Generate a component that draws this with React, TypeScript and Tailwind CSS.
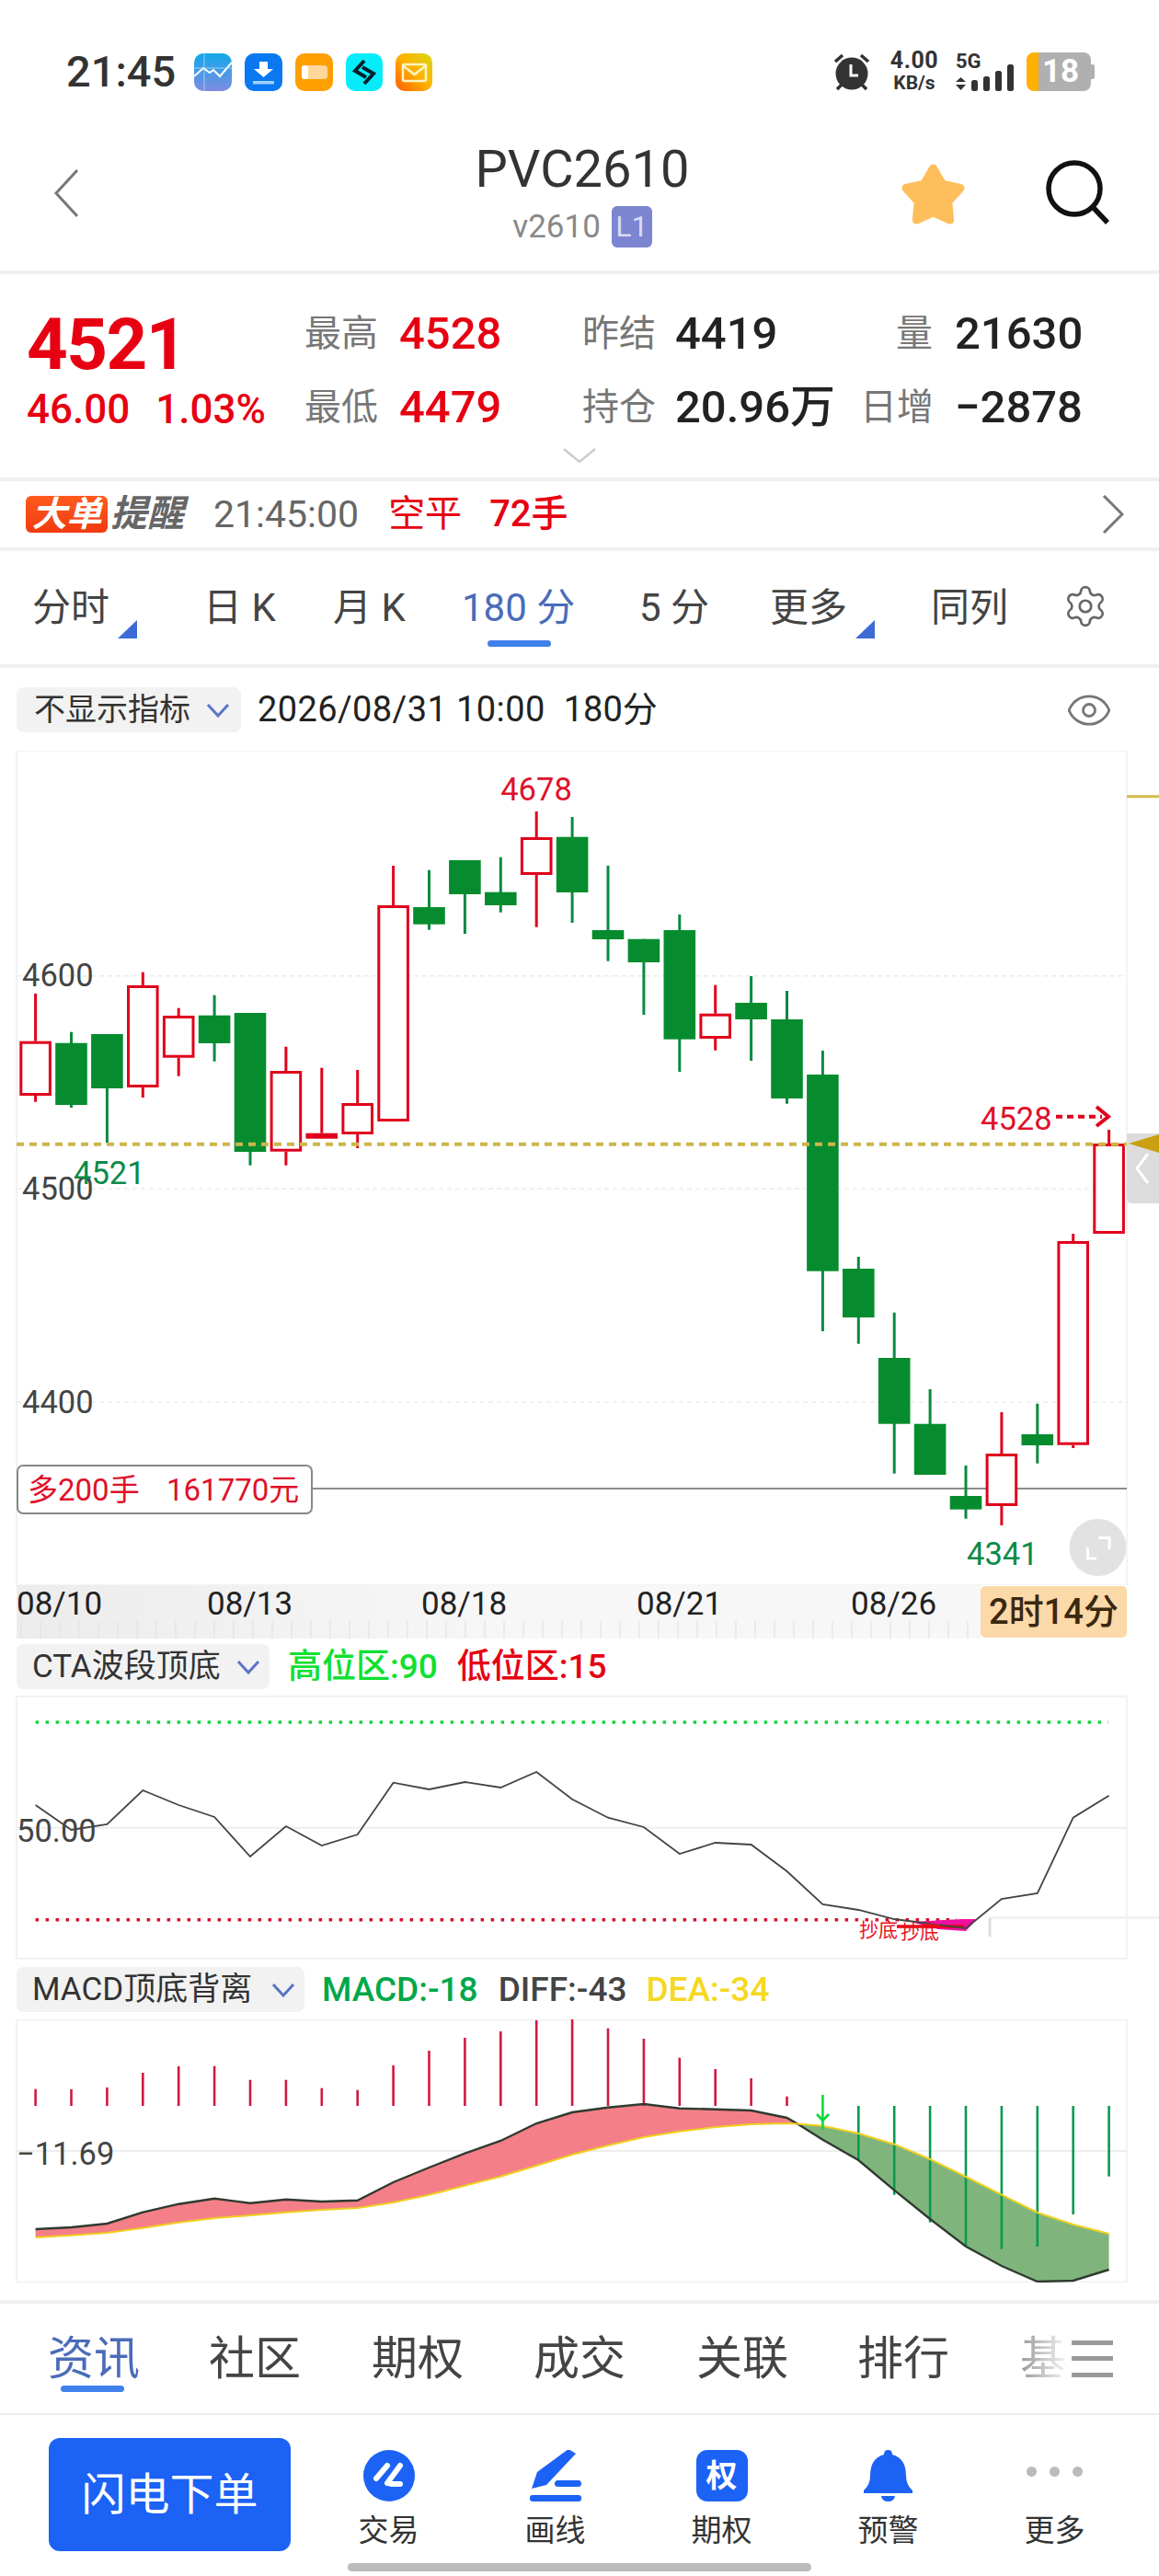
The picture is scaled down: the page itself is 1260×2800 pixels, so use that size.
import React from "react";
import { Eye, Settings } from "lucide-react";

const X = (i: number) => 38.6 + 38.9 * i;
type C = ["r" | "g", number, number, number, number];
const candles: C[] = [
  ["r", 1081, 1132.7, 1192, 1198.7],
  ["g", 1122.7, 1134.7, 1202, 1205],
  ["g", 1125, 1125, 1184, 1243],
  ["r", 1057.7, 1072, 1183, 1194],
  ["r", 1096.7, 1105, 1150.7, 1170.7],
  ["g", 1082.7, 1104.7, 1135, 1154.7],
  ["g", 1102, 1102, 1253, 1267.7],
  ["r", 1138.7, 1165, 1252.7, 1267.7],
  ["r", 1161.7, 1232.7, 1238.7, 1238.7],
  ["r", 1164, 1200, 1234, 1249],
  ["r", 942, 985, 1220, 1220],
  ["g", 946.7, 987, 1005.7, 1011.7],
  ["g", 936, 936, 973, 1016],
  ["g", 932.7, 970.7, 985, 992.7],
  ["r", 883, 911, 952, 1008.7],
  ["g", 889, 910.7, 971, 1004],
  ["g", 942, 1012, 1022, 1045.7],
  ["g", 1021.7, 1021.7, 1047, 1104],
  ["g", 995, 1012, 1130.7, 1166],
  ["r", 1071.7, 1102.7, 1130, 1142.7],
  ["g", 1062, 1091, 1109, 1154],
  ["g", 1078, 1109, 1195, 1200.7],
  ["g", 1143, 1169, 1382.7, 1448],
  ["g", 1367, 1380, 1433, 1461.7],
  ["g", 1427.7, 1477, 1548.7, 1602.7],
  ["g", 1511, 1548.7, 1604, 1604],
  ["g", 1594, 1627, 1641.7, 1651.7],
  ["r", 1536, 1581, 1638, 1659],
  ["g", 1526.7, 1560, 1572, 1591.7],
  ["r", 1342, 1350, 1571.7, 1575],
  ["r", 1229, 1244, 1342, 1342],
];
const cta = [1963, 1990, 1984, 1947, 1963, 1976, 2019, 1986, 2007, 1995, 1938.7, 1946, 1938, 1944, 1927, 1956.7, 1976.7, 1987, 2016, 2004, 2006, 2035, 2071, 2077, 2087, 2092, 2097, 2065, 2059, 1976.7, 1952.7];
const macdTop = [2271.7, 2272, 2270, 2254, 2247, 2246.7, 2261.7, 2261.7, 2270.7, 2272.7, 2246, 2230, 2216, 2209, 2197, 2196, 2205.7, 2217, 2237.7, 2250, 2260, 2279.7];
const macdBot = [2348, 2386.7, 2416.7, 2441.7, 2445.7, 2443, 2408, 2366.7];
const diff = [2424, 2422, 2418, 2405.7, 2396.7, 2390.7, 2395.7, 2391.7, 2394, 2392.7, 2373, 2357, 2341.7, 2328, 2309, 2297, 2291.7, 2288, 2292.7, 2293.7, 2295, 2303];
const diff2 = [2326.7, 2349, 2381.7, 2413, 2442.7, 2464, 2481, 2480, 2468];
const dea = [2433, 2430.7, 2428, 2422.7, 2416.7, 2412, 2409, 2405.7, 2403, 2401, 2395, 2386.7, 2376.7, 2366.7, 2355, 2343, 2333, 2324, 2317.7, 2313, 2310, 2309];
const dea2 = [2311.7, 2320, 2331.7, 2348, 2367, 2386.7, 2406, 2419, 2429];
const cross = "867,2309.5";
const pts = (a: number[], from = 0) => a.map((y, i) => `${X(i + from).toFixed(1)},${y}`).join(" ");
const RED = "#e0001b";
const GREEN = "#068c2e";

function MainChart() {
  return (
    <svg viewBox="0 817 1260 907" className="block w-[1260px] h-[907px]">
      <rect x="18" y="817" width="1207" height="907" fill="none" stroke="#f0f0f0" strokeWidth="1.5" />
      {[1061.7, 1293, 1525].map((y) => (
        <line key={y} x1="18" x2="1225" y1={y} y2={y} stroke="#ececec" strokeWidth="1.5" strokeDasharray="5 4" />
      ))}
      <line x1="339" x2="1225" y1="1619" y2="1619" stroke="#666" strokeWidth="1.6" />
      {candles.map(([c, wt, bt, bb, wb], i) => {
        const x = X(i);
        if (c === "g")
          return (
            <g key={i}>
              <line x1={x} x2={x} y1={wt} y2={wb} stroke="#0a8a40" strokeWidth="3" />
              <rect x={x - 17.3} y={bt} width="34.6" height={bb - bt} fill={GREEN} />
            </g>
          );
        return (
          <g key={i}>
            <line x1={x} x2={x} y1={wt} y2={bt} stroke={RED} strokeWidth="3" />
            <line x1={x} x2={x} y1={bb} y2={wb} stroke={RED} strokeWidth="3" />
            <rect x={x - 15.8} y={bt + 1.5} width="31.6" height={bb - bt - 3} fill="#fff" stroke={RED} strokeWidth="3" />
          </g>
        );
      })}
      <line x1="18" x2="1225" y1="1244.7" y2="1244.7" stroke="#cdb64a" strokeWidth="4" strokeDasharray="8 6" />
      <g fontSize="34.5" fill="#444">
        <text x="24" y="1073">4600</text>
        <text x="24" y="1305">4500</text>
        <text x="24" y="1537">4400</text>
      </g>
      <text x="583" y="871" fontSize="34.5" fill="#e0102a" textAnchor="middle">4678</text>
      <text x="80" y="1288" fontSize="34.5" fill="#0a8a48">4521</text>
      <text x="1066" y="1229" fontSize="34.5" fill="#e0102a">4528</text>
      <text x="1051" y="1702" fontSize="34.5" fill="#0a8a48">4341</text>
      <line x1="1148" x2="1198" y1="1214.7" y2="1214.7" stroke={RED} strokeWidth="4" strokeDasharray="7 5" />
      <path d="M1192 1204 L1205 1214.7 L1192 1225" fill="none" stroke={RED} strokeWidth="4" />
      <path d="M1225 1233 H1260 V1309 H1231 Q1225 1309 1225 1303 Z" fill="#dcdcdc" />
      <path d="M1227 1244 L1260 1234 V1254 Z" fill="#c9a010" />
      <path d="M1248 1255 L1236 1271 L1248 1287" fill="none" stroke="#fff" strokeWidth="3" />
      <line x1="1225" x2="1260" y1="866.7" y2="866.7" stroke="#d4b94a" strokeWidth="3" />
      <circle cx="1193.5" cy="1683" r="31" fill="#e2e2e2" />
      <path d="M1194 1672.5 H1206 V1685 M1182.5 1683 V1695 H1192" fill="none" stroke="#fff" strokeWidth="3" />
      <rect x="19" y="1594" width="320" height="52" rx="6" fill="#fff" stroke="#888" strokeWidth="2" />
      <text x="30" y="1632" fontSize="33" fill="#e0102a">多200手</text>
      <text x="181" y="1632" fontSize="33" fill="#e0102a">161770元</text>
    </svg>
  );
}

function CtaChart() {
  return (
    <svg viewBox="0 1844 1260 287" className="block w-[1260px] h-[287px]">
      <rect x="18" y="1845" width="1207" height="285" fill="none" stroke="#eee" strokeWidth="1.5" />
      <line x1="18" x2="1225" y1="1987.7" y2="1987.7" stroke="#eee" strokeWidth="2" />
      <line x1="38.6" x2="1205" y1="1873" y2="1873" stroke="#16d43c" strokeWidth="3.5" strokeDasharray="3.5 7.5" />
      <line x1="38.6" x2="1040" y1="2087.7" y2="2087.7" stroke="#d8102c" strokeWidth="3.5" strokeDasharray="3.5 7.5" />
      <polygon points="990,2090 1046,2087 1062,2087 1050,2100 1020,2098" fill="#f010a0" />
      <line x1="975" x2="1048" y1="2095" y2="2095" stroke="#f00018" strokeWidth="3.5" />
      <rect x="1075" y="2084" width="350" height="3" fill="#f2f2f2" />
      <line x1="1076" x2="1076" y1="2086" y2="2106" stroke="#ddd" strokeWidth="3" />
      <polyline points={pts(cta)} fill="none" stroke="#444" strokeWidth="1.8" />
      <text x="18" y="2003" fontSize="34.5" fill="#444">50.00</text>
      <g fontSize="21" fill="#e8101c">
        <text x="934" y="2106">抄底</text>
        <text x="979" y="2108">抄底</text>
      </g>
    </svg>
  );
}

function MacdChart() {
  const up = `${pts(diff)} ${cross} ${[...dea].reverse().map((y, i) => `${X(21 - i).toFixed(1)},${y}`).join(" ")}`;
  const down = `${cross} ${pts(diff2, 22)} ${[...dea2].reverse().map((y, i) => `${X(30 - i).toFixed(1)},${y}`).join(" ")}`;
  return (
    <svg viewBox="0 2196 1260 286" className="block w-[1260px] h-[286px]">
      <rect x="18" y="2196.5" width="1207" height="285" fill="none" stroke="#eee" strokeWidth="1.5" />
      <line x1="18" x2="1225" y1="2339" y2="2339" stroke="#eee" strokeWidth="2" />
      <polygon points={up} fill="#f47f88" />
      <polygon points={down} fill="#7fb57d" />
      {macdTop.map((y, i) => (
        <line key={i} x1={X(i)} x2={X(i)} y1={y} y2="2290" stroke="#d0193f" strokeWidth="2.6" />
      ))}
      {macdBot.map((y, i) => (
        <line key={i} x1={X(i + 23)} x2={X(i + 23)} y1="2290" y2={y} stroke="#079a50" strokeWidth="2.6" />
      ))}
      <polyline points={`${pts(diff)} ${cross} ${pts(diff2, 22)}`} fill="none" stroke="#2f3a2f" strokeWidth="2.4" />
      <polyline points={`${pts(dea)} ${cross} ${pts(dea2, 22)}`} fill="none" stroke="#f0cf20" strokeWidth="2" />
      <line x1={X(22)} x2={X(22)} y1="2278" y2="2316" stroke="#10d838" strokeWidth="2.6" />
      <path d="M888 2299 L894.4 2306 L901 2299" fill="none" stroke="#10d838" strokeWidth="2.6" />
      <text x="18" y="2354" fontSize="34.5" fill="#444">−11.69</text>
    </svg>
  );
}

function Chevron() {
  return (
    <svg viewBox="0 0 26 16" className="w-[26px] h-[16px] ml-auto">
      <path d="M2 2 L13 14 L24 2" fill="none" stroke="#5a74c8" strokeWidth="3" />
    </svg>
  );
}

function Triangle() {
  return (
    <svg viewBox="0 0 21 20" className="absolute w-[21px] h-[20px] right-[-30px] bottom-[-8px]">
      <path d="M21 0 V20 H0 Z" fill="#3c6bd6" />
    </svg>
  );
}

function StatusIcons() {
  return (
    <div className="flex items-center gap-[14px] ml-[20px]">
      <svg viewBox="0 0 41 41" className="w-[41px] h-[41px]">
        <defs>
          <linearGradient id="st" x1="0" y1="0" x2="0" y2="1">
            <stop offset="0" stopColor="#12a8ea" />
            <stop offset="1" stopColor="#7f8be0" />
          </linearGradient>
        </defs>
        <rect width="41" height="41" rx="10" fill="url(#st)" />
        <path d="M0 25 L10 16 L17 21 L21 18 L28 25 L41 10" fill="none" stroke="#fff" strokeWidth="2" />
        <path d="M11 0 V41 M0 16 H41" stroke="#bfe8ff" strokeWidth="0.7" />
      </svg>
      <svg viewBox="0 0 41 41" className="w-[41px] h-[41px]">
        <rect width="41" height="41" rx="10" fill="#0a78f0" />
        <path d="M16 9 H25 V17 H31 L20.5 26 L10 17 H16 Z" fill="#fff" />
        <rect x="9" y="30" width="23" height="3.5" fill="#9fd0ff" />
      </svg>
      <svg viewBox="0 0 41 41" className="w-[41px] h-[41px]">
        <rect width="41" height="41" rx="10" fill="#ff9f00" />
        <rect x="7" y="13" width="28" height="15" rx="4" fill="#ffd79a" />
        <rect x="7" y="13" width="7" height="15" rx="3" fill="#fff" />
      </svg>
      <svg viewBox="0 0 40 41" className="w-[40px] h-[41px]">
        <rect width="40" height="41" rx="10" fill="#05ecfb" />
        <path d="M20 8 L10 19 L22 26 M20 33 L30 22 L18 15" fill="none" stroke="#04202a" strokeWidth="4" />
      </svg>
      <svg viewBox="0 0 40 41" className="w-[40px] h-[41px]">
        <defs>
          <linearGradient id="ml" x1="1" y1="0" x2="0" y2="1">
            <stop offset="0" stopColor="#d8d810" />
            <stop offset="0.5" stopColor="#ffb000" />
            <stop offset="1" stopColor="#ff5a00" />
          </linearGradient>
        </defs>
        <rect width="40" height="41" rx="10" fill="url(#ml)" />
        <rect x="8" y="12" width="25" height="18" rx="1.5" fill="none" stroke="#fff3c4" strokeWidth="2.6" />
        <path d="M9 14 L20.5 23 L32 14" fill="none" stroke="#fff3c4" strokeWidth="2.6" />
      </svg>
    </div>
  );
}

function StatusRight() {
  return (
    <div className="flex items-center ml-auto mr-[70px] text-[#333]">
      <svg viewBox="0 0 40 42" className="w-[40px] h-[42px]">
        <circle cx="20" cy="23" r="17.5" fill="#333" />
        <path d="M19 13 V25 H27" fill="none" stroke="#fff" strokeWidth="3" />
        <path d="M2 10 L10 3 M30 3 L38 10 M4 40 L9 35 M36 40 L31 35" stroke="#333" strokeWidth="3.6" />
      </svg>
      <div className="flex flex-col items-center w-[54px] ml-[21px] font-bold">
        <span className="text-[25px] leading-[24px] tracking-[0.5px]">4.00</span>
        <span className="text-[21px] leading-[24px]">KB/s</span>
      </div>
      <div className="flex flex-col ml-[18px] w-[64px]">
        <span className="text-[22px] leading-[19px] font-bold h-[15px]">5G</span>
        <svg viewBox="0 0 64 29" className="w-[64px] h-[29px] -mt-[2px]">
          <path d="M0 19 L5.5 14 L11 19 Z M0 22 L5.5 28 L11 22 Z" fill="#333" />
          <rect x="17" y="17" width="7" height="12" rx="2.5" fill="#333" />
          <rect x="30" y="13" width="7" height="16" rx="2.5" fill="#333" />
          <rect x="43" y="7" width="7" height="22" rx="2.5" fill="#333" />
          <rect x="56" y="0" width="7" height="29" rx="2.5" fill="#333" />
        </svg>
      </div>
      <div className="flex items-center ml-[13px]">
        <div className="flex w-[70px] h-[42px] rounded-[8px] overflow-hidden">
          <div className="w-[13px] bg-[#ffb000]"></div>
          <div className="flex-1 bg-[#b0b0b0] text-white text-[35px] leading-[42px] font-bold pl-[4px]">18</div>
        </div>
        <div className="w-[4px] h-[16px] bg-[#b0b0b0] rounded-r-[2px]"></div>
      </div>
    </div>
  );
}

function Star() {
  const p: string[] = [];
  for (let k = 0; k < 10; k++) {
    const r = k % 2 === 0 ? 31 : 17;
    const a = (Math.PI / 5) * k - Math.PI / 2;
    p.push(`${(35.5 + r * Math.cos(a)).toFixed(1)},${(40 + r * Math.sin(a)).toFixed(1)}`);
  }
  return (
    <svg viewBox="0 0 71 71" className="w-[71px] h-[71px]">
      <polygon points={p.join(" ")} fill="#ffbe5c" stroke="#ffbe5c" strokeWidth="9" strokeLinejoin="round" />
    </svg>
  );
}

function Stat({ label, value, red, labelW = 79, gap = 24 }: { label: string; value: string; red?: boolean; labelW?: number; gap?: number }) {
  return (
    <div className="flex items-center h-[50px]">
      <span className="text-[40px] leading-[50px] text-[#777] text-right whitespace-nowrap" style={{ width: labelW }}>{label}</span>
      <span className={`text-[49px] leading-[50px] font-medium whitespace-nowrap ${red ? "text-[#e60012]" : "text-[#222]"}`} style={{ marginLeft: gap }}>{value}</span>
    </div>
  );
}

function Tab({ w, active, tri, children }: { w: string; active?: boolean; tri?: boolean; children: React.ReactNode }) {
  return (
    <div className={`${w} h-full flex items-center`}>
      <span className={`relative text-[42px] leading-[50px] whitespace-nowrap ${active ? "text-[#4a6cb8]" : "text-[#444]"}`}>
        {children}
        {tri && <Triangle />}
        {active && <span className="absolute left-[28px] top-[60px] w-[69px] h-[7px] rounded-[4px] bg-[#3f80ea]"></span>}
      </span>
    </div>
  );
}

function BottomItem({ icon, label }: { icon: React.ReactNode; label: string }) {
  return (
    <div className="w-[181px] flex flex-col items-center mt-[13px]">
      <div className="h-[56px] flex items-center justify-center">{icon}</div>
      <span className="mt-[12px] text-[33px] leading-[40px] text-[#333]">{label}</span>
    </div>
  );
}

export default function App() {
  return (
    <div className="w-[1260px] h-[2800px] bg-white flex flex-col overflow-hidden font-['Roboto','Noto_Sans_CJK_SC',sans-serif]">
      {/* status bar */}
      <div className="h-[130px] pt-[57px] shrink-0">
        <div className="flex items-center h-[42px] pl-[72px]">
          <span className="text-[47px] leading-[42px] font-medium text-[#333]">21:45</span>
          <StatusIcons />
          <StatusRight />
        </div>
      </div>

      {/* nav */}
      <div className="h-[164px] shrink-0 flex">
        <div className="w-[390px] pl-[58px] pt-[53px]">
          <svg viewBox="0 0 28 54" className="w-[28px] h-[54px]">
            <path d="M26 2 L3 27 L26 52" fill="none" stroke="#777" strokeWidth="3" />
          </svg>
        </div>
        <div className="w-[486px] flex flex-col items-center pt-[26px]">
          <span className="text-[56px] leading-[56px] text-[#333]">PVC2610</span>
          <div className="flex items-center gap-[12px] mt-[12px]">
            <span className="text-[35px] leading-[45px] text-[#888]">v2610</span>
            <span className="w-[44px] h-[45px] rounded-[6px] bg-[#7c85d0] text-[#d8dcf5] text-[32px] leading-[45px] text-center">L1</span>
          </div>
        </div>
        <div className="flex-1 flex items-start pt-[44px]">
          <div className="ml-[103px]"><Star /></div>
          <svg viewBox="0 0 70 70" className="w-[70px] h-[70px] ml-[87px]">
            <circle cx="31" cy="31" r="28" fill="none" stroke="#111" strokeWidth="5.5" />
            <path d="M51 51 L67 68" stroke="#111" strokeWidth="5.5" />
          </svg>
        </div>
      </div>
      <div className="h-[4px] shrink-0 bg-[#f0f0f0]"></div>

      {/* quote */}
      <div className="h-[221px] shrink-0 flex flex-col">
        <div className="h-[180px] flex">
          <div className="w-[331px] pl-[29px] pt-[38px]">
            <div className="text-[78px] leading-[78px] font-bold tracking-[-1.5px] text-[#e60012]">4521</div>
            <div className="flex gap-[28px] mt-[8px] text-[44px] leading-[46px] font-medium text-[#e60012] whitespace-nowrap">
              <span>46.00</span>
              <span>1.03%</span>
            </div>
          </div>
          <div className="w-[302px] pt-[40px] flex flex-col gap-[30px]">
            <Stat label="最高" value="4528" red />
            <Stat label="最低" value="4479" red />
          </div>
          <div className="w-[302px] pt-[40px] flex flex-col gap-[30px]">
            <Stat label="昨结" value="4419" gap={22} />
            <Stat label="持仓" value="20.96万" gap={22} />
          </div>
          <div className="pt-[40px] flex flex-col gap-[30px]">
            <Stat label="量" value="21630" />
            <Stat label="日增" value="−2878" />
          </div>
        </div>
        <div className="flex justify-center pt-[9px]">
          <svg viewBox="0 0 36 16" className="w-[36px] h-[16px]">
            <path d="M1 1 L18 15 L35 1" fill="none" stroke="#ccc" strokeWidth="2.5" />
          </svg>
        </div>
      </div>
      <div className="h-[4px] shrink-0 bg-[#f0f0f0]"></div>

      {/* big-order alert */}
      <div className="h-[72px] shrink-0 flex items-center pl-[28px]">
        <span className="w-[89px] h-[40px] rounded-[6px] bg-gradient-to-b from-[#ff5a1e] to-[#f03a10] text-white text-[38px] leading-[40px] font-bold italic text-center whitespace-nowrap">大单</span>
        <span className="ml-[3px] text-[40px] leading-[40px] font-bold italic text-[#666]">提醒</span>
        <span className="ml-[32px] text-[41px] leading-[50px] text-[#666]">21:45:00</span>
        <span className="ml-[32px] text-[40px] leading-[50px] text-[#e60012]">空平</span>
        <span className="ml-[30px] text-[40px] leading-[50px] font-medium text-[#e60012]">72手</span>
        <svg viewBox="0 0 24 42" className="w-[24px] h-[42px] ml-auto mr-[38px]">
          <path d="M2 1 L22 21 L2 41" fill="none" stroke="#777" strokeWidth="3" />
        </svg>
      </div>
      <div className="h-[4px] shrink-0 bg-[#f0f0f0]"></div>

      {/* period tabs */}
      <div className="h-[123px] shrink-0 flex pl-[35px]">
        <Tab w="w-[186px]" tri>分时</Tab>
        <Tab w="w-[141px]">日 K</Tab>
        <Tab w="w-[140px]">月 K</Tab>
        <Tab w="w-[193px]" active>180 分</Tab>
        <Tab w="w-[142px]">5 分</Tab>
        <Tab w="w-[175px]" tri>更多</Tab>
        <Tab w="w-[143px]">同列</Tab>
        <div className="h-full flex items-center -mt-[2px]">
          <Settings size={50} strokeWidth={1.3} color="#666" />
        </div>
      </div>
      <div className="h-[4px] shrink-0 bg-[#f0f0f0]"></div>

      {/* main chart header */}
      <div className="h-[90px] shrink-0 pt-[21px] pl-[18px] flex items-start">
        <div className="w-[244px] h-[49px] rounded-[8px] bg-[#f2f2f2] flex items-center pl-[19px] pr-[12px]">
          <span className="text-[34px] leading-[49px] text-[#333] whitespace-nowrap">不显示指标</span>
          <Chevron />
        </div>
        <span className="ml-[18px] text-[38px] leading-[49px] text-[#222] tracking-[0.4px] whitespace-nowrap">2026/08/31 10:00</span>
        <span className="ml-[20px] text-[38px] leading-[49px] text-[#222] whitespace-nowrap">180分</span>
        <div className="ml-auto mr-[50px] h-[49px] flex items-center">
          <Eye size={52} strokeWidth={1.3} color="#777" />
        </div>
      </div>

      <div className="h-[907px] shrink-0"><MainChart /></div>

      {/* date axis */}
      <div className="h-[58px] shrink-0 flex pl-[18px]">
        <div className="w-[1048px] h-full bg-gradient-to-r from-[#ececec] via-[#f7f7f7] to-[#f7f7f7]">
          <svg viewBox="18 1724 1048 58" className="block w-[1048px] h-[58px]">
            {Array.from({ length: 50 }).map((_, i) => (
              <line key={i} x1={23 + 21 * i} x2={23 + 21 * i} y1="1763" y2="1782" stroke="#e2e2e2" strokeWidth="1.2" />
            ))}
            <g fontSize="35" fill="#222">
              <text x="18" y="1756">08/10</text>
              <text x="225" y="1756">08/13</text>
              <text x="458" y="1756">08/18</text>
              <text x="692" y="1756">08/21</text>
              <text x="925" y="1756">08/26</text>
            </g>
          </svg>
        </div>
        <div className="w-[159px] h-[56px] mt-[1px] rounded-[5px] bg-[#fcd9a8] flex items-center justify-center text-[38px] leading-[56px] font-medium text-[#3a2810] whitespace-nowrap">2时14分</div>
      </div>

      {/* CTA */}
      <div className="h-[62px] shrink-0 pt-[6px] pl-[18px] flex items-start">
        <div className="w-[275px] h-[49px] rounded-[8px] bg-[#f2f2f2] flex items-center pl-[17px] pr-[10px]">
          <span className="text-[35px] leading-[49px] text-[#333] whitespace-nowrap">CTA波段顶底</span>
          <Chevron />
        </div>
        <span className="ml-[20px] text-[37px] leading-[49px] font-medium text-[#10e030] whitespace-nowrap">高位区:90</span>
        <span className="ml-[21px] text-[37px] leading-[49px] font-medium text-[#e60012] whitespace-nowrap">低位区:15</span>
      </div>
      <div className="h-[287px] shrink-0"><CtaChart /></div>

      {/* MACD */}
      <div className="h-[65px] shrink-0 pt-[8px] pl-[18px] flex items-start">
        <div className="w-[313px] h-[49px] rounded-[8px] bg-[#f2f2f2] flex items-center pl-[17px] pr-[10px]">
          <span className="text-[35px] leading-[49px] text-[#333] whitespace-nowrap">MACD顶底背离</span>
          <Chevron />
        </div>
        <span className="ml-[19px] text-[37px] leading-[49px] font-medium text-[#00a84a] whitespace-nowrap">MACD:-18</span>
        <span className="ml-[22px] text-[37px] leading-[49px] font-medium text-[#444] whitespace-nowrap">DIFF:-43</span>
        <span className="ml-[21px] text-[37px] leading-[49px] font-medium text-[#f5d820] whitespace-nowrap">DEA:-34</span>
      </div>
      <div className="h-[286px] shrink-0"><MacdChart /></div>

      <div className="h-[19px] shrink-0"></div>
      <div className="h-[4px] shrink-0 bg-[#f0f0f0]"></div>

      {/* info tabs */}
      <div className="h-[119px] shrink-0 flex items-center pl-[52px] text-[50px] leading-[60px] text-[#444]">
        <div className="w-[175px]">
          <span className="relative text-[#4a6cb8]">资讯
            <span className="absolute left-[14px] top-[58px] w-[69px] h-[7px] rounded-[4px] bg-[#3f80ea]"></span>
          </span>
        </div>
        <span className="w-[177px]">社区</span>
        <span className="w-[176px]">期权</span>
        <span className="w-[177px]">成交</span>
        <span className="w-[175px]">关联</span>
        <span className="w-[177px]">排行</span>
        <span className="bg-gradient-to-r from-[#999] to-[#f4f4f4] bg-clip-text text-transparent">基</span>
        <div className="ml-[6px] w-[45px] h-[40px] flex flex-col justify-between">
          <div className="h-[5px] bg-[#999]"></div>
          <div className="h-[5px] bg-[#999]"></div>
          <div className="h-[5px] bg-[#999]"></div>
        </div>
      </div>
      <div className="h-[2px] shrink-0 bg-[#eee]"></div>

      {/* bottom bar */}
      <div className="flex-1 flex flex-col">
        <div className="flex items-start pt-[25px] pl-[53px]">
          <div className="w-[263px] h-[123px] rounded-[12px] bg-[#1c62f5] flex items-center justify-center text-white text-[48px] leading-[60px]">闪电下单</div>
          <div className="flex ml-[16px]">
            <BottomItem
              label="交易"
              icon={
                <svg viewBox="0 0 56 56" className="w-[56px] h-[56px]">
                  <circle cx="28" cy="28" r="28" fill="#1c62f5" />
                  <path d="M26 17 L14 31 M40 17 L26 36 M30 37 H40" fill="none" stroke="#fff" strokeWidth="6" strokeLinecap="round" />
                </svg>
              }
            />
            <BottomItem
              label="画线"
              icon={
                <svg viewBox="0 0 56 56" className="w-[56px] h-[56px]">
                  <path d="M42 2 Q50 2 47 12 L26 36 L2 42 Q3 28 10 22 L36 3 Z" fill="none" />
                  <path d="M40 1 L48 6 L16 40 L0 44 L6 26 Z" fill="#1c62f5" transform="translate(2 -2)" />
                  <rect x="27" y="33" width="29" height="7" rx="3.5" fill="#1c62f5" />
                  <rect x="0" y="49" width="56" height="7" rx="3" fill="#1c62f5" />
                </svg>
              }
            />
            <BottomItem
              label="期权"
              icon={<div className="w-[56px] h-[56px] rounded-[12px] bg-[#1c62f5] text-white text-[34px] leading-[56px] font-bold text-center">权</div>}
            />
            <BottomItem
              label="预警"
              icon={
                <svg viewBox="0 0 53 56" className="w-[53px] h-[56px]">
                  <path d="M26.5 0 Q31 0 31 5 Q46 9 46 28 Q46 38 53 44 V47 H0 V44 Q7 38 7 28 Q7 9 22 5 Q22 0 26.5 0 Z" fill="#1c62f5" />
                  <path d="M19 50 H34 Q33 56 26.5 56 Q20 56 19 50 Z" fill="#1c62f5" />
                </svg>
              }
            />
            <BottomItem
              label="更多"
              icon={
                <div className="flex gap-[14px] -mt-[10px]">
                  <span className="w-[11px] h-[11px] rounded-full bg-[#bbb]"></span>
                  <span className="w-[11px] h-[11px] rounded-full bg-[#bbb]"></span>
                  <span className="w-[11px] h-[11px] rounded-full bg-[#bbb]"></span>
                </div>
              }
            />
          </div>
        </div>
        <div className="mt-[13px] mx-auto w-[504px] h-[9px] rounded-full bg-[#bbb]"></div>
      </div>
    </div>
  );
}
